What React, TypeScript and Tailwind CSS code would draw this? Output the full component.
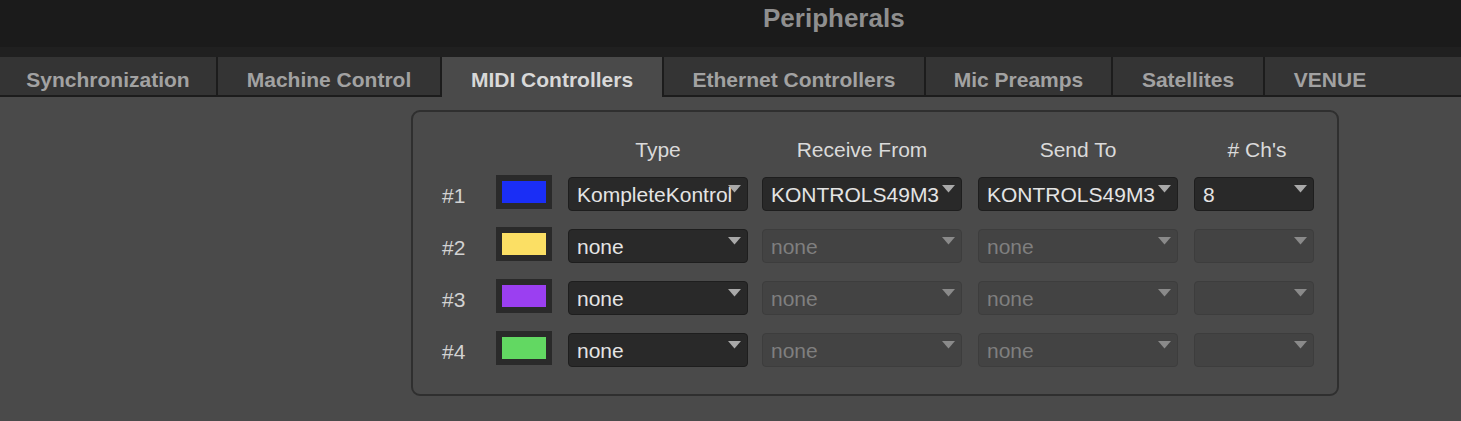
import React from 'react';

type Tab = { label: string; width: string; active?: boolean; last?: boolean };

const TABS: Tab[] = [
  { label: 'Synchronization', width: 'w-[218px]' },
  { label: 'Machine Control', width: 'w-[224px]' },
  { label: 'MIDI Controllers', width: 'w-[222px]', active: true },
  { label: 'Ethernet Controllers', width: 'w-[262px]' },
  { label: 'Mic Preamps', width: 'w-[187px]' },
  { label: 'Satellites', width: 'w-[152px]' },
  { label: 'VENUE', width: 'w-[130px]', last: true },
];

type Row = {
  num: string;
  color: string;
  type: string;
  receive: string;
  send: string;
  chs: string;
  enabled: boolean;
};

const ROWS: Row[] = [
  { num: '#1', color: 'bg-[#1a2ef6]', type: 'KompleteKontrol', receive: 'KONTROLS49M3', send: 'KONTROLS49M3', chs: '8', enabled: true },
  { num: '#2', color: 'bg-[#fbdf64]', type: 'none', receive: 'none', send: 'none', chs: '', enabled: false },
  { num: '#3', color: 'bg-[#9b3ff1]', type: 'none', receive: 'none', send: 'none', chs: '', enabled: false },
  { num: '#4', color: 'bg-[#62d862]', type: 'none', receive: 'none', send: 'none', chs: '', enabled: false },
];

function Dropdown({ value, width, disabled }: { value: string; width: string; disabled?: boolean }) {
  return (
    <div
      className={`relative h-[34px] ${width} rounded-[4px] border flex items-center pl-[8px] pt-[1px] overflow-hidden ${
        disabled
          ? 'bg-[#434343] border-[#3d3d3d] text-[#7f7f7f]'
          : 'bg-[#292929] border-[#1e1e1e] text-[#e4e4e4]'
      }`}
    >
      <span className="whitespace-nowrap leading-none text-[21px]">{value}</span>
      <svg
        className="absolute top-[7px] right-[6px]"
        width="13"
        height="8"
        viewBox="0 0 13 8"
      >
        <polygon points="0,0 13,0 6.5,7.5" fill={disabled ? '#8a8a8a' : '#a9a9a9'} />
      </svg>
    </div>
  );
}

export default function App() {
  return (
    <div className="w-[1461px] h-[421px] overflow-hidden bg-[#4a4a4a] font-['Liberation_Sans',Arial,sans-serif]">
      {/* window title */}
      <div className="h-[47px] bg-[#1b1b1b] pl-[763px] pt-[5px]">
        <span className="block leading-none text-[26px] font-bold text-[#8f8f8f]">Peripherals</span>
      </div>
      <div className="h-[10px] bg-[#202020]" />

      {/* tabs */}
      <div className="flex h-[40px]">
        {TABS.map((t) => (
          <div
            key={t.label}
            className={`${t.width} shrink-0 flex items-center justify-center pt-[6px] text-[21px] font-bold leading-none whitespace-nowrap border-[#1c1c1c] ${
              t.last ? '' : 'border-r-2'
            } ${t.active ? 'bg-[#4a4a4a] text-[#d8d8d8] pb-[2px]' : 'bg-[#343434] text-[#a2a2a2] border-b-2'}`}
          >
            {t.label}
          </div>
        ))}
        <div className="flex-1 bg-[#343434] border-b-2 border-[#1c1c1c]" />
      </div>

      {/* MIDI controllers panel */}
      <div className="ml-[411px] mt-[13px] w-[928px] h-[286px] rounded-[9px] border-2 border-[#2f2f2f] pl-[29px] pt-[26px]">
        <div className="grid grid-cols-[54px_72px_194px_216px_216px_120px] text-[21px] text-[#dadada]">
          <div />
          <div />
          <div className="w-[180px] text-center leading-[24px]">Type</div>
          <div className="w-[200px] text-center leading-[24px]">Receive From</div>
          <div className="w-[200px] text-center leading-[24px]">Send To</div>
          <div className="w-[120px] text-center leading-[24px] pl-[6px]">#&nbsp;Ch's</div>
        </div>

        <div className="mt-[13px] flex flex-col gap-[18px]">
          {ROWS.map((r) => (
            <div key={r.num} className="grid grid-cols-[54px_72px_194px_216px_216px_120px] items-center h-[34px]">
              <div className="text-[21px] leading-none text-[#d2d2d2] pt-[2px]">{r.num}</div>
              <div className="w-[56px] h-[34px] mb-[4px] bg-[#2a2a2a] p-[6px]">
                <div className={`w-full h-full ${r.color}`} />
              </div>
              <Dropdown value={r.type} width="w-[180px]" />
              <Dropdown value={r.receive} width="w-[200px]" disabled={!r.enabled} />
              <Dropdown value={r.send} width="w-[200px]" disabled={!r.enabled} />
              <Dropdown value={r.chs} width="w-[120px]" disabled={!r.enabled} />
            </div>
          ))}
        </div>
      </div>
    </div>
  );
}
